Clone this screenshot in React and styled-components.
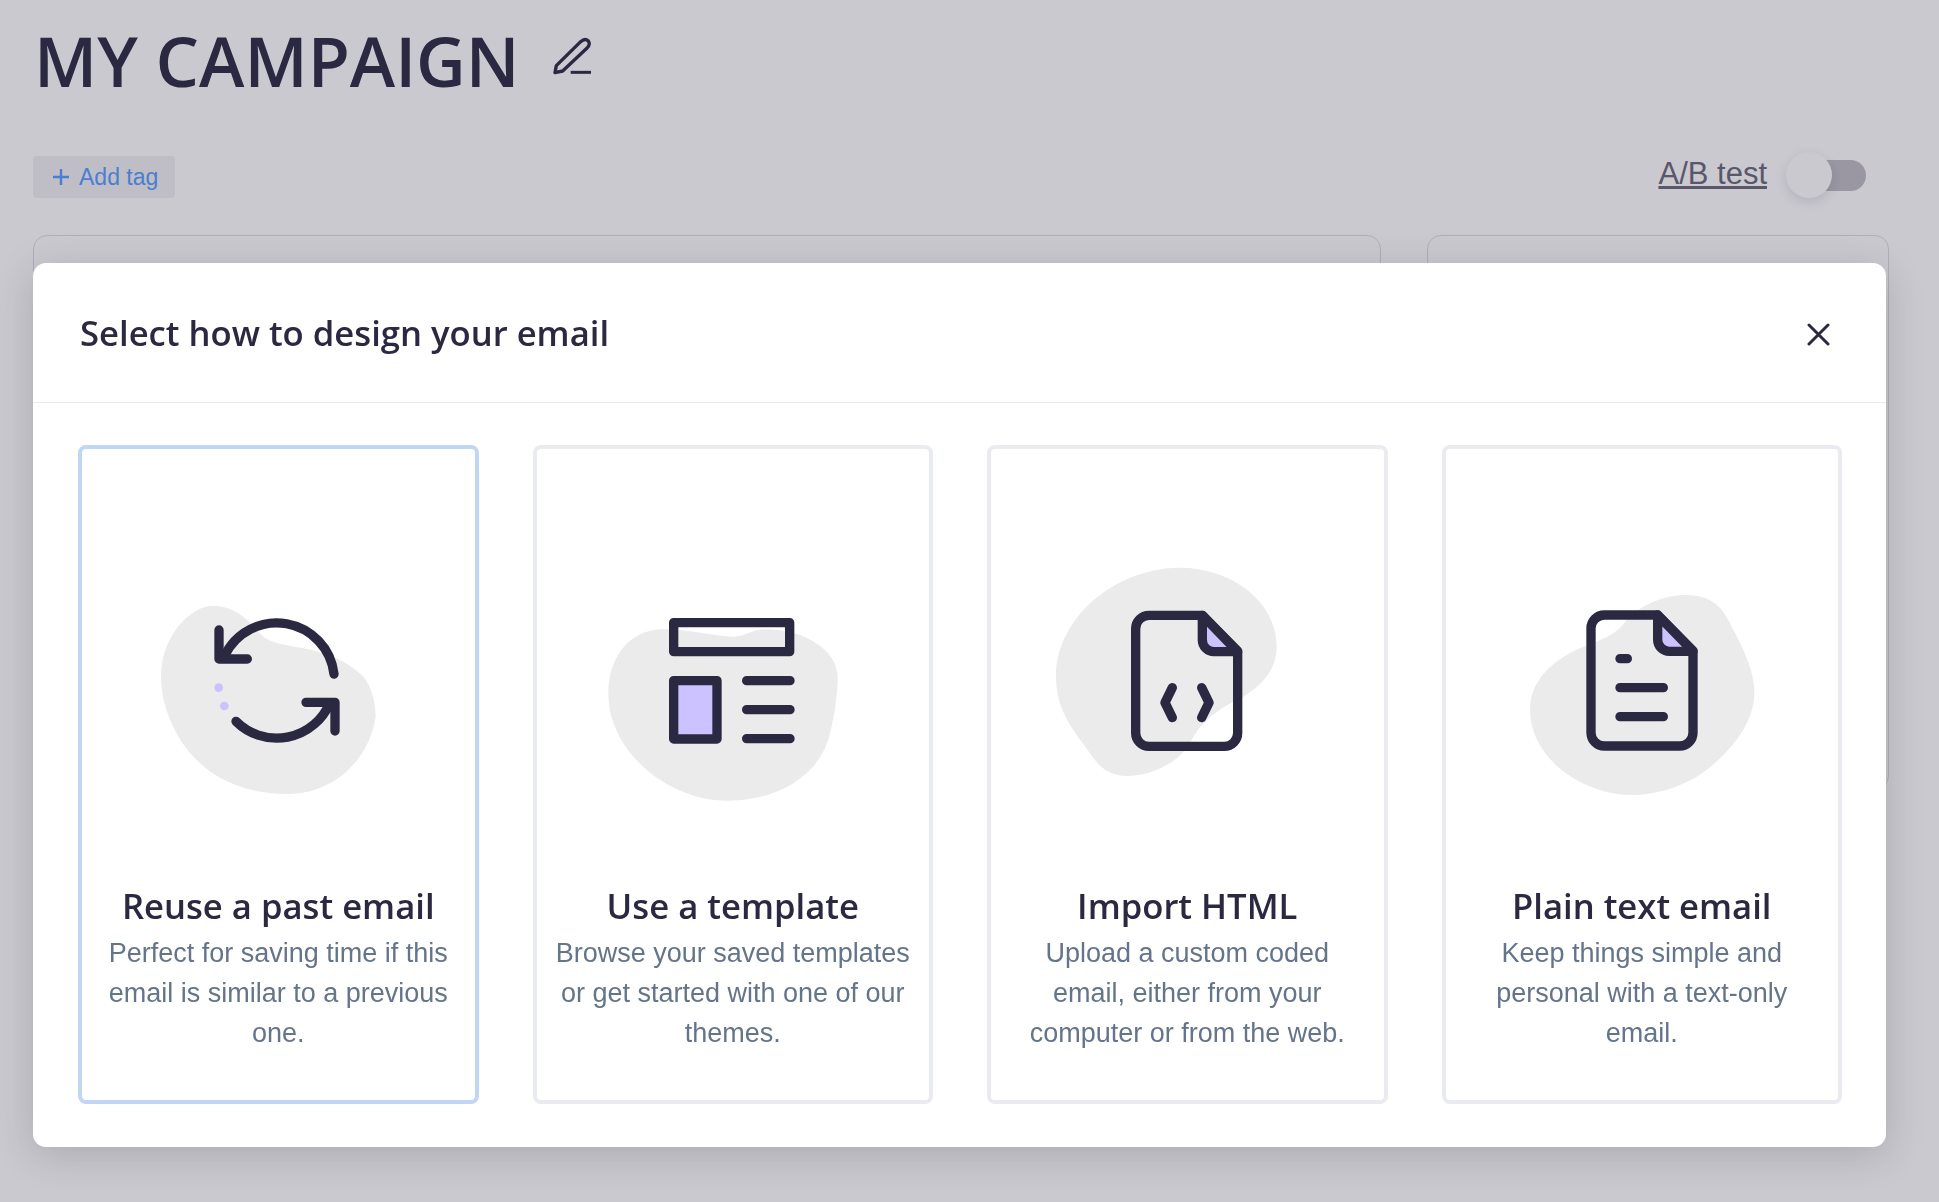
import styled, { createGlobalStyle } from 'styled-components';

const INK = '#2b2842';
const LILAC = '#cbc2ff';
const BLOB = '#ebebeb';

const GlobalStyle = createGlobalStyle`
  html, body {
    margin: 0;
    height: 100%;
    overflow: hidden;
    background: #fff;
    font-family: 'Liberation Sans', Arial, sans-serif;
  }
  * {
    box-sizing: border-box;
  }
`;

const Page = styled.div`
  height: 1202px;
  padding: 0 50px 0 33px;
`;

const TitleRow = styled.div`
  display: flex;
  align-items: center;
  gap: 20px;
  height: 122px;
`;

const Title = styled.h1`
  margin: 0 0 0 1px;
  font-family: 'Open Sans', sans-serif;
  font-size: 68.6px;
  font-weight: 600;
  line-height: 1;
  color: ${INK};
`;

const EditIcon = styled.svg`
  flex: none;
  margin-top: -12px;
`;

const MetaRow = styled.div`
  display: flex;
  align-items: center;
  justify-content: space-between;
  height: 113px;
  padding-bottom: 3px;
`;

const TagButton = styled.button`
  display: flex;
  align-items: center;
  gap: 10px;
  height: 42px;
  padding: 0 17px 0 20px;
  border: 0;
  border-radius: 4px;
  background: #f0f0f2;
  color: #549cff;
  font: 400 23px 'Liberation Sans', Arial, sans-serif;
`;

const AbGroup = styled.div`
  display: flex;
  align-items: center;
  gap: 26px;
  margin: -3px 23px 0 0;
`;

const AbLabel = styled.a`
  margin-top: -3px;
  color: #6a6778;
  font-size: 31px;
  text-decoration: underline;
`;

const Toggle = styled.div`
  position: relative;
  width: 73px;
  height: 31px;
  border-radius: 16px;
  background: #bfbdc3;
`;

const Knob = styled.span`
  position: absolute;
  left: -7px;
  top: -8px;
  width: 46px;
  height: 46px;
  border-radius: 50%;
  background: #fff;
  box-shadow: 0 4px 12px rgba(43, 40, 66, 0.14);
`;

const Columns = styled.div`
  display: grid;
  grid-template-columns: 1348px 462px;
  gap: 46px;
  align-items: start;
`;

const Panel = styled.section`
  height: ${(p) => p.$height}px;
  border: 1.5px solid #dcdbe5;
  border-radius: 14px;
  background: #fff;
`;

const Overlay = styled.div`
  position: fixed;
  inset: 0;
  padding: 263px 53px 0 33px;
  background: rgba(43, 40, 66, 0.25);
`;

const Modal = styled.div`
  height: 884px;
  border-radius: 13px;
  background: #fff;
  box-shadow: 0 8px 40px rgba(0, 0, 0, 0.16);
`;

const ModalHeader = styled.header`
  display: flex;
  align-items: center;
  justify-content: space-between;
  height: 140px;
  padding: 0 56px 0 47px;
  border-bottom: 1px solid #e9ebf0;
`;

const ModalTitle = styled.h2`
  margin: 0;
  font-family: 'Open Sans', sans-serif;
  font-size: 34.65px;
  font-weight: 600;
  color: ${INK};
`;

const CloseButton = styled.button`
  display: flex;
  padding: 3px 0 0;
  border: 0;
  background: none;
`;

const Options = styled.div`
  display: grid;
  grid-template-columns: repeat(4, 1fr);
  gap: 54px;
  padding: 42px 44px 44px 45px;
`;

const OptionCard = styled.div`
  display: flex;
  flex-direction: column;
  align-items: center;
  height: 659px;
  padding-top: 111px;
  border: 4px solid ${(p) => (p.$active ? '#bfd6f5' : '#e9ebf0')};
  border-radius: 8px;
  text-align: center;
`;

const Art = styled.svg`
  flex: none;
  width: 280px;
  height: 260px;
`;

const OptionTitle = styled.h3`
  margin: 63px 0 0;
  font-family: 'Open Sans', sans-serif;
  font-size: 34.65px;
  font-weight: 600;
  line-height: 46px;
  color: ${INK};
`;

const OptionText = styled.p`
  margin: 4px 0 0;
  padding: 0 17px;
  color: #64748b;
  font-size: 27px;
  line-height: 40px;
`;

const Stroke = { fill: 'none', stroke: INK, strokeWidth: 28, strokeLinecap: 'round', strokeLinejoin: 'round' };

function DocOutline() {
  return (
    <>
      <path {...Stroke} d="M487 196H327A40 40 0 0 0 287 236V549A40 40 0 0 0 327 589H553A40 40 0 0 0 593 549V303Z" />
      <path {...Stroke} fill={LILAC} d="M487 196V270A35 35 0 0 0 522 305H593Z" />
    </>
  );
}

function ReuseArt() {
  return (
    <Art viewBox="24 -30 840 780">
      <path
        fill={BLOB}
        d="M250 107C300 107 350 140 385 185C410 215 430 217 520 235C600 250 660 280 700 320C725 350 737 400 737 440C720 560 620 672 470 672C350 672 260 630 200 570C130 500 93 400 93 320C93 200 180 107 250 107Z"
      />
      <path {...Stroke} d="M612 312A173 173 0 0 0 285 255" />
      <path {...Stroke} d="M267 180V267H352" />
      <path {...Stroke} d="M318 454A173 173 0 0 0 599 400" />
      <path {...Stroke} d="M528 397H615V483" />
      <circle cx="266" cy="353" r="13" fill={LILAC} />
      <circle cx="283" cy="408" r="13" fill={LILAC} />
    </Art>
  );
}

function TemplateArt() {
  return (
    <Art viewBox="9 -60 840 780">
      <path
        fill={BLOB}
        d="M220 148C300 148 380 170 430 170C470 170 480 148 530 148C640 148 743 210 743 290C743 340 735 400 720 460C690 590 560 662 410 662C240 662 55 520 55 340C55 230 120 148 220 148Z"
      />
      <rect {...Stroke} x="251" y="128" width="348" height="87" />
      <rect {...Stroke} fill={LILAC} x="251" y="302" width="130" height="175" />
      <path {...Stroke} d="M470 302H600M470 389H600M470 476H600" />
    </Art>
  );
}

function HtmlArt() {
  return (
    <Art viewBox="21 30 840 780">
      <path
        fill={BLOB}
        d="M420 53C580 53 710 160 710 290C710 370 650 420 590 450C530 480 480 520 455 570C420 640 330 678 260 678C200 678 170 640 150 610C110 550 48 490 48 380C48 200 230 53 420 53Z"
      />
      <DocOutline />
      <path {...Stroke} d="M397 413L375 458L397 503M485 413L507 458L485 503" />
    </Art>
  );
}

function PlainArt() {
  return (
    <Art viewBox="-24 -60 840 780">
      <path
        fill={BLOB}
        d="M530 45C590 45 630 70 655 120C690 190 733 260 733 340C733 440 640 540 560 590C500 625 430 645 370 645C210 645 60 530 60 390C60 300 130 240 210 205C270 180 320 165 345 125C390 75 460 45 530 45Z"
      />
      <g transform="translate(-44 -91)">
        <DocOutline />
      </g>
      <path {...Stroke} d="M330 236H352M330 323H460M330 410H460" />
    </Art>
  );
}

const options = [
  { title: 'Reuse a past email', text: 'Perfect for saving time if this email is similar to a previous one.', Icon: ReuseArt, active: true },
  { title: 'Use a template', text: 'Browse your saved templates or get started with one of our themes.', Icon: TemplateArt },
  { title: 'Import HTML', text: 'Upload a custom coded email, either from your computer or from the web.', Icon: HtmlArt },
  { title: 'Plain text email', text: 'Keep things simple and personal with a text-only email.', Icon: PlainArt },
];

export default function App() {
  return (
    <>
      <GlobalStyle />
      <Page>
        <TitleRow>
          <Title>MY CAMPAIGN</Title>
          <EditIcon width="70" height="60" viewBox="0 0 210 180" fill="none" stroke={INK}>
            <path strokeWidth="10" strokeLinejoin="round" d="M45 143L49 122L122 50Q135 38 145 48Q152 58 142 68L68 138Z" />
            <path strokeWidth="9" d="M92 142H153" />
          </EditIcon>
        </TitleRow>
        <MetaRow>
          <TagButton>
            <svg width="16" height="16" viewBox="0 0 16 16" stroke="currentColor" strokeWidth="2.4">
              <path d="M8 0V16M0 8H16" />
            </svg>
            Add tag
          </TagButton>
          <AbGroup>
            <AbLabel>A/B test</AbLabel>
            <Toggle>
              <Knob />
            </Toggle>
          </AbGroup>
        </MetaRow>
        <Columns>
          <Panel $height={800} />
          <Panel $height={555} />
        </Columns>
      </Page>
      <Overlay>
        <Modal>
          <ModalHeader>
            <ModalTitle>Select how to design your email</ModalTitle>
            <CloseButton>
              <svg width="23" height="23" viewBox="0 0 23 23" stroke={INK} strokeWidth="3" strokeLinecap="round">
                <path d="M2 2L21 21M21 2L2 21" />
              </svg>
            </CloseButton>
          </ModalHeader>
          <Options>
            {options.map(({ title, text, Icon, active }) => (
              <OptionCard key={title} $active={active}>
                <Icon />
                <OptionTitle>{title}</OptionTitle>
                <OptionText>{text}</OptionText>
              </OptionCard>
            ))}
          </Options>
        </Modal>
      </Overlay>
    </>
  );
}
